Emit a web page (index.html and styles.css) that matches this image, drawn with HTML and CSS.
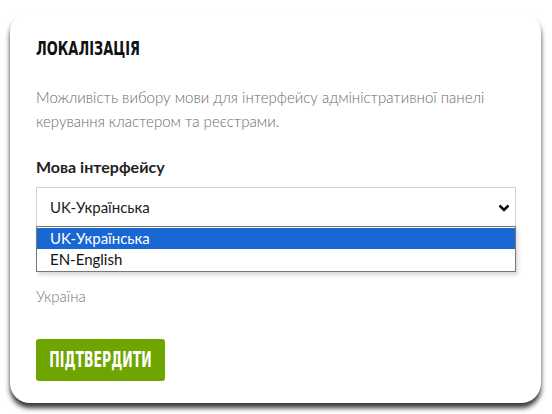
FILE: index.html
```html
<!DOCTYPE html>
<html lang="uk">
<head>
<meta charset="utf-8">
<link rel="stylesheet" href="styles.css">
</head>
<body>
<div class="card">
  <h2 class="title"><span class="title-text">ЛОКАЛІЗАЦІЯ</span></h2>
  <p class="desc">Можливість вибору мови для інтерфейсу адміністративної панелі керування кластером та реєстрами.</p>
  <div class="label">Мова інтерфейсу</div>
  <div class="select-wrap">
    <div class="select">
      <span>UK-Українська</span>
      <svg class="chev" width="12" height="8" viewBox="0 0 12 8"><polyline points="1.5,1.5 6,6 10.5,1.5" fill="none" stroke="#111" stroke-width="2.6"/></svg>
    </div>
    <div class="dropdown">
      <div class="opt opt-active">UK-Українська</div>
      <div class="opt">EN-English</div>
    </div>
  </div>
  <div class="label label2">Країна реєстру</div>
  <div class="value">Україна</div>
  <div class="btn-row"><button class="btn"><span class="btn-text">ПІДТВЕРДИТИ</span></button></div>
</div>
</body>
</html>
```
FILE: styles.css
```css
html, body { margin: 0; padding: 0; background: #fff; }
body { font-family: "Lato", "Open Sans", sans-serif; width: 552px; height: 414px; overflow: hidden; }
.card {
  margin: 12px 11px 0 10px;
  height: 391px;
  box-sizing: border-box;
  background: #fff;
  border-radius: 20px;
  box-shadow: 0 5px 5px 0 rgba(0,0,0,0.78);
  padding: 24px 26px 22px 26px;
  display: flex;
  flex-direction: column;
}
.title { margin: 0; height: 24px; line-height: 24px; font-size: 20px; font-weight: bold; font-family: "DejaVu Sans Condensed", "DejaVu Sans", sans-serif; font-stretch: condensed; color: #111; white-space: nowrap; }
.title-text { display: inline-block; transform-origin: left center; transform: scaleX(0.72); }
.desc { margin: 25px 0 0; font-size: 15px; line-height: 24px; font-weight: 300; color: #6a6a6a; }
.label { margin-top: 24px; font-size: 16px; line-height: 20px; font-weight: bold; color: #222; }
.select-wrap { position: relative; margin-top: 10px; width: 480px; }
.select { height: 40px; box-sizing: border-box; border: 1px solid #cfcfd6; display: flex; align-items: center; justify-content: space-between; padding: 0 5px 0 13px; font-size: 15px; color: #222; }
.chev { display: block; margin-top: 1px; }
.dropdown { position: absolute; left: 0; top: 39px; width: 480px; box-sizing: border-box; border: 1px solid #777; background: #fff; padding: 1px 0; box-shadow: 2px 3px 4px rgba(0,0,0,0.15); }
.opt { height: 21px; line-height: 21px; padding-left: 13px; font-size: 15px; color: #111; }
.opt-active { background: #1967d2; color: #fff; }
.label2 { margin-top: 23px; }
.value { margin-top: 16px; font-size: 15px; line-height: 20px; font-weight: 300; color: #777; }
.btn-row { margin-top: 33px; display: flex; }
.btn { width: 129px; height: 42px; border: none; border-radius: 3px; background: #6ea500; color: #fff; padding: 0; font-family: "DejaVu Sans Condensed", "DejaVu Sans", sans-serif; font-stretch: condensed; font-weight: bold; font-size: 21px; display: flex; align-items: center; justify-content: center; }
.btn-text { display: inline-block; transform: scaleX(0.66); white-space: nowrap; }
```
